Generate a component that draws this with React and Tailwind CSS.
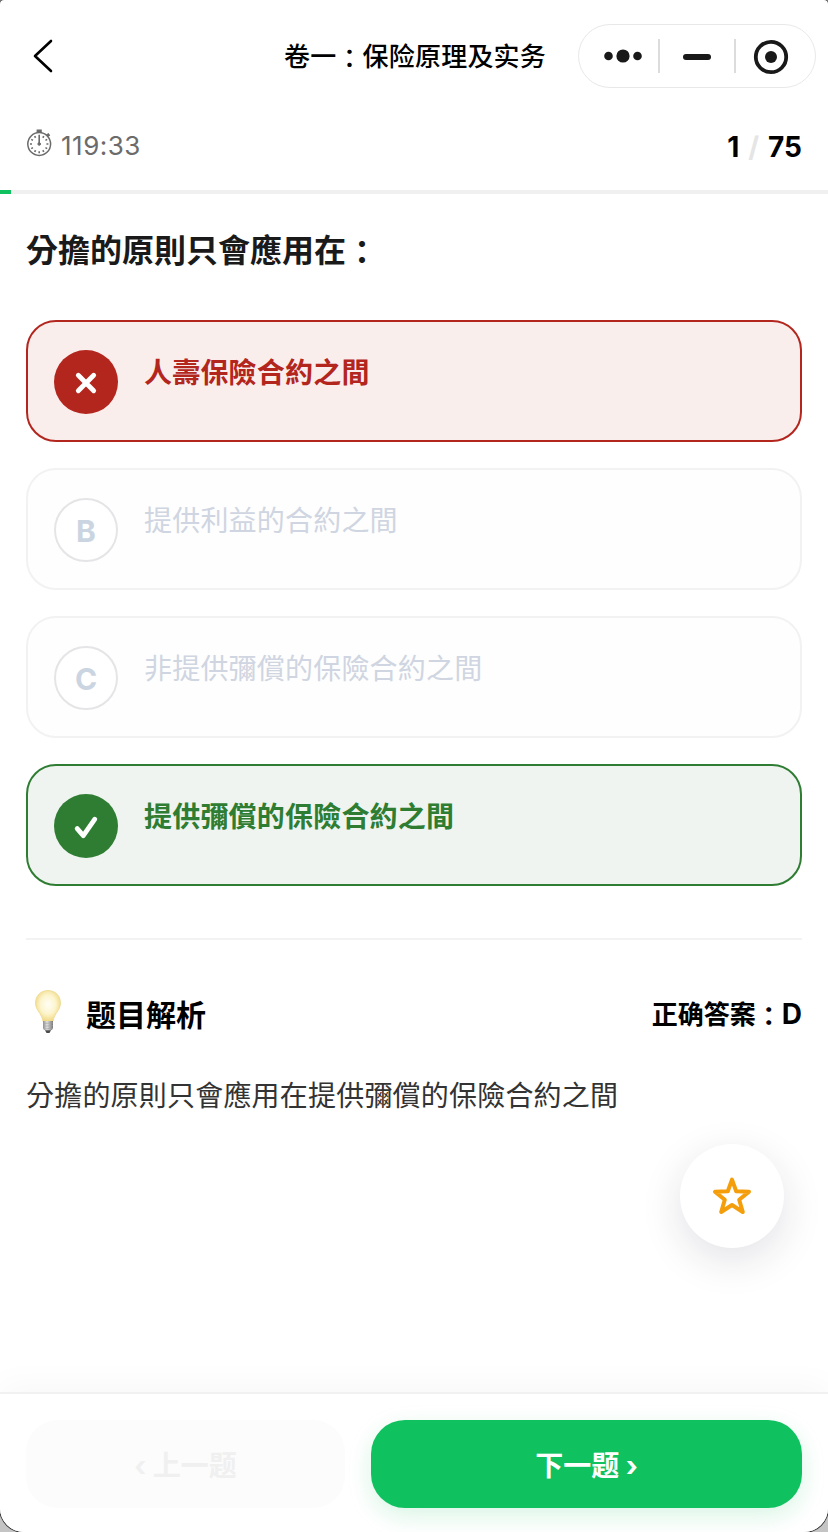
import React from 'react';

const options = [
  { key: 'A', text: '人壽保險合約之間', state: 'wrong' },
  { key: 'B', text: '提供利益的合約之間', state: 'idle' },
  { key: 'C', text: '非提供彌償的保險合約之間', state: 'idle' },
  { key: 'D', text: '提供彌償的保險合約之間', state: 'right' },
];

const cardStyles = {
  wrong: 'border-[#b3261e] bg-[#faeeed] text-[#b3261e] font-bold',
  right: 'border-[#2e7d32] bg-[#eff4f0] text-[#2e7d32] font-bold',
  idle: 'border-[#f2f2f3] bg-[#fefefe] text-[#cfd5e1]',
};

const badgeStyles = {
  wrong: 'bg-[#b3261e] text-white',
  right: 'bg-[#2e7d32] text-white',
  idle: 'border-2 border-[#e5e5e7] bg-white text-[#cbd5e1]',
};

// The full-width colon sits in the middle of its cell in the TC face
function Colon() {
  return <span className="align-[-2px] font-['Noto_Sans_CJK_TC',sans-serif] leading-none">：</span>;
}

function NavBar() {
  return (
    <header className="flex h-28 shrink-0 items-center pl-[26px] pr-3">
      <svg width="34" height="40" viewBox="0 0 34 40" fill="none" stroke="#000" strokeWidth="2.6" strokeLinecap="round" strokeLinejoin="round">
        <path d="M25 5 L9 20 L25 35" />
      </svg>
      <h1 className="ml-auto mr-8 pt-0.5 text-[26px] font-medium leading-9 tracking-[0.2px] text-black">
        卷一<Colon />保险原理及实务
      </h1>
      <div className="flex h-16 w-[238px] items-center rounded-full border border-[#e8e8e8] bg-white">
        <svg width="236" height="62" viewBox="0 0 236 62" fill="#191919">
          <circle cx="29.5" cy="31" r="4.3" />
          <circle cx="44" cy="31" r="6.6" />
          <circle cx="58.5" cy="31" r="4.3" />
          <rect x="79" y="14" width="2" height="34" fill="#dcdcdc" />
          <rect x="104" y="29" width="28" height="6" rx="3" />
          <rect x="155" y="14" width="2" height="34" fill="#dcdcdc" />
          <circle cx="192" cy="32" r="15.2" fill="none" stroke="#191919" strokeWidth="3.8" />
          <circle cx="192" cy="32" r="6" />
        </svg>
      </div>
    </header>
  );
}

function StopwatchIcon() {
  const ticks = [30, 60, 90, 120, 150, 180, 210, 240, 270, 300, 330];
  return (
    <svg width="26" height="28" viewBox="0 0 26 28" fill="none" stroke="#6b6b6b">
      <circle cx="13.2" cy="15" r="11.4" strokeWidth="1.5" />
      <path d="M10.6 2 H15.8" strokeWidth="2.8" />
      <path d="M21 6.8 L23.4 5.2" strokeWidth="3" />
      {ticks.map((deg) => (
        <path key={deg} d="M13.2 5.8 V7.8" strokeWidth="1.6" transform={`rotate(${deg} 13.2 15)`} />
      ))}
      <path d="M13.2 5.8 V15" strokeWidth="1.6" />
      <circle cx="13.2" cy="15" r="1.3" fill="#6b6b6b" />
    </svg>
  );
}

function StatusRow() {
  return (
    <div className="shrink-0">
      <div className="flex h-[78px] items-center justify-between px-[26px] pb-2.5">
        <div className="flex items-center text-[26px] leading-8 text-[#6b6b6b]">
          <span className="-mt-1.5"><StopwatchIcon /></span>
          <span className="ml-[9px] tracking-[0.5px]">119:33</span>
        </div>
        <div className="flex items-center pt-px text-[28px] font-bold leading-8 text-black">
          <span>1</span>
          <span className="mx-[9px] text-[#e5e5e5]">/</span>
          <span>75</span>
        </div>
      </div>
      <div className="h-1 bg-[#f0f0f0]">
        <div className="h-full bg-[#10c160]" style={{ width: `${(1 / 75) * 100}%` }} />
      </div>
    </div>
  );
}

function Badge({ option }) {
  return (
    <div className={`flex size-16 shrink-0 items-center justify-center rounded-full text-[30px] font-bold leading-none ${badgeStyles[option.state]}`}>
      {option.state === 'idle' && <span className="mt-0.5">{option.key}</span>}
      {option.state === 'wrong' && (
        <svg width="64" height="64" viewBox="0 0 64 64" stroke="#fff" strokeWidth="4.8" strokeLinecap="round">
          <path d="M24.3 25.3 L39.7 40.7 M39.7 25.3 L24.3 40.7" />
        </svg>
      )}
      {option.state === 'right' && (
        <svg width="64" height="64" viewBox="0 0 64 64" fill="none" stroke="#fff" strokeWidth="4.8" strokeLinecap="round" strokeLinejoin="round">
          <path d="M23.2 34.6 L29.3 41.6 L40.8 25.2" />
        </svg>
      )}
    </div>
  );
}

function OptionCard({ option }) {
  return (
    <div className={`flex h-[122px] items-start gap-[26px] rounded-[30px] border-2 p-[26px] pt-7 ${cardStyles[option.state]}`}>
      <Badge option={option} />
      <p className="text-[28px] leading-[46px] tracking-[0.2px]">{option.text}</p>
    </div>
  );
}

function BulbIcon() {
  return (
    <svg width="44" height="46" viewBox="0 0 44 46">
      <defs>
        <radialGradient id="glass" cx="50%" cy="45%" r="55%">
          <stop offset="0" stopColor="#fffef4" />
          <stop offset="0.55" stopColor="#fdf5cf" />
          <stop offset="1" stopColor="#f0d982" />
        </radialGradient>
        <linearGradient id="base" x1="0" x2="1">
          <stop offset="0" stopColor="#8d8d8d" />
          <stop offset="0.4" stopColor="#e2e2e2" />
          <stop offset="1" stopColor="#777" />
        </linearGradient>
      </defs>
      <path d="M22 1.5 C14.6 1.5 9.5 7 9.5 14 C9.5 21.5 15.8 24 17 32.5 H27 C28.2 24 34.5 21.5 34.5 14 C34.5 7 29.4 1.5 22 1.5Z" fill="url(#glass)" stroke="#ecd98f" strokeWidth="0.8" />
      <path d="M17 32 H27 V39 Q26.5 41 24.5 41.5 H19.5 Q17.5 41 17 39Z" fill="url(#base)" />
      <path d="M17 34.5 L27 33.8 M17 37.3 L27 36.6 M17.6 40 L26.6 39.2" stroke="#a0a0a0" strokeWidth="0.6" />
      <path d="M19 41.3 H25 L23.5 44 H20.5Z" fill="#4b4b4b" />
    </svg>
  );
}

function Analysis() {
  return (
    <section className="mt-[52px] border-t-2 border-[#f3f3f3]">
      <div className="mt-[50px] flex h-12 items-center justify-between">
        <div className="flex items-center">
          <span className="-mt-1"><BulbIcon /></span>
          <h3 className="ml-4 pt-px text-[30px] font-bold leading-10 text-black">题目解析</h3>
        </div>
        <p className="pt-px text-[26px] font-bold leading-10 text-black">
          正确答案<Colon /><span className="text-[28px]">D</span>
        </p>
      </div>
      <p className="mt-[33px] text-[28px] leading-[50px] tracking-[0.2px] text-[#333]">
        分擔的原則只會應用在提供彌償的保險合約之間
      </p>
    </section>
  );
}

function FavoriteButton() {
  return (
    <button className="absolute right-11 top-[1144px] flex size-[104px] items-center justify-center rounded-full bg-white shadow-[0_12px_40px_rgba(30,30,60,0.13)]">
      <svg width="44" height="44" viewBox="0 0 44 44" fill="none" stroke="#f59e0b" strokeWidth="4" strokeLinejoin="round">
        <path d="M22 5.6 L26.2 17.2 L39 17.7 L29.2 25.8 L32.8 38 L22 31 L11.2 38 L14.8 25.8 L5 17.7 L17.8 17.2Z" />
      </svg>
    </button>
  );
}

function BottomBar() {
  return (
    <footer className="flex h-[140px] shrink-0 gap-[26px] border-t-2 border-[#f1f1f1] bg-white px-[26px] pt-[26px] text-[28px] font-bold shadow-[0_-8px_30px_rgba(0,0,0,0.03)]">
      <button disabled className="h-[88px] w-[319px] rounded-[32px] bg-[#fcfcfc] pt-1 text-[#f0f0f0]">
        ‹ 上一题
      </button>
      <button className="h-[88px] flex-1 rounded-[34px] bg-[#10c160] pt-1 text-white shadow-[0_8px_24px_rgba(16,193,96,0.16)]">
        下一题 ›
      </button>
    </footer>
  );
}

export default function App() {
  return (
    <div className="h-[1532px] w-[828px] overflow-hidden bg-[#c4c4c4] font-['Inter','Noto_Sans_CJK_SC',sans-serif]">
      <div className="relative flex h-[1532px] flex-col overflow-hidden rounded-b-[24px] rounded-t-[4px] bg-white shadow-[0_0_0_1px_#333]">
        <NavBar />
        <StatusRow />
        <main className="flex-1 px-[26px] pt-[30px] font-['Inter','Noto_Sans_CJK_TC',sans-serif]">
          <h2 className="pt-0.5 text-[32px] font-bold leading-[50px] text-[#1a1a1a]">分擔的原則只會應用在<Colon /></h2>
          <div className="mt-11 flex flex-col gap-[26px]">
            {options.map((option) => (
              <OptionCard key={option.key} option={option} />
            ))}
          </div>
          <Analysis />
        </main>
        <FavoriteButton />
        <BottomBar />
      </div>
    </div>
  );
}
